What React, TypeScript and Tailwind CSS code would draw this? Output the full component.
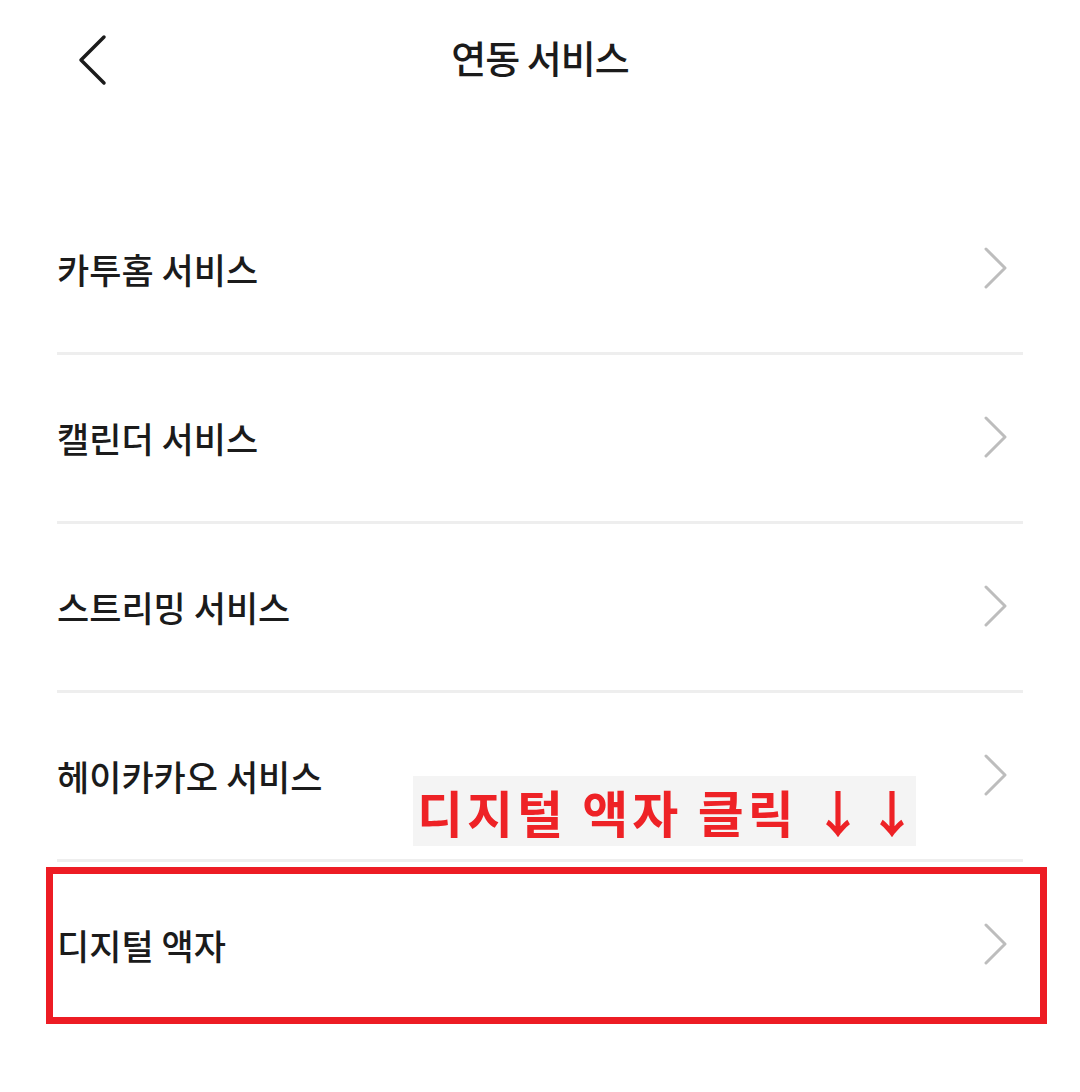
import React from "react";

const rows = ["카투홈 서비스", "캘린더 서비스", "스트리밍 서비스", "헤이카카오 서비스", "디지털 액자"];

function Chevron() {
  return (
    <svg width="26" height="44" viewBox="0 0 26 44" fill="none">
      <path d="M3 2 L22 21 L3 40" stroke="#bdbdbd" strokeWidth="3" strokeLinecap="round" strokeLinejoin="round" />
    </svg>
  );
}

export default function App() {
  return (
    <div
      className="w-[1080px] h-[1092px] bg-white overflow-hidden text-[#1b1b1b]"
      style={{ fontFamily: '"Noto Sans CJK KR", "Noto Sans", sans-serif' }}
    >
      {/* 헤더 */}
      <div className="relative h-[120px] flex items-center justify-center pb-[8px]">
        <button className="absolute left-[74px] top-[34px] w-[36px] h-[52px] flex items-center justify-center">
          <svg width="32" height="52" viewBox="0 0 32 52" fill="none">
            <path d="M28 3 L5 26 L28 49" stroke="#1b1b1b" strokeWidth="3.5" strokeLinecap="round" strokeLinejoin="round" />
          </svg>
        </button>
        <h1 className="text-[38px] font-medium tracking-[-1px]">연동 서비스</h1>
      </div>

      <div className="mt-[66px] px-[57px]">
        {rows.map((label, i) => (
          <div
            key={label}
            className={
              i < rows.length - 1
                ? "relative h-[169px] flex items-center justify-between border-b-[3px] border-[#eeeeee]"
                : "relative h-[166px] flex items-center justify-between"
            }
          >
            <span className="text-[35px] font-medium">{label}</span>
            <span className="mr-[14px]">
              <Chevron />
            </span>

            {i === 3 && (
              <div className="absolute left-[356px] top-[83px] w-[503px] h-[70px] bg-[#f4f4f4] flex items-center pl-[4px]">
                <span className="text-[50px] font-bold text-[#ee2226] tracking-[4px] leading-none whitespace-nowrap">
                  디지털 액자 클릭 ↓↓
                </span>
              </div>
            )}

            {i === 4 && (
              <div className="absolute left-[-11px] right-[-24px] top-[5px] bottom-[4px] border-[7px] border-[#ed1c24] pointer-events-none" />
            )}
          </div>
        ))}
      </div>
    </div>
  );
}
